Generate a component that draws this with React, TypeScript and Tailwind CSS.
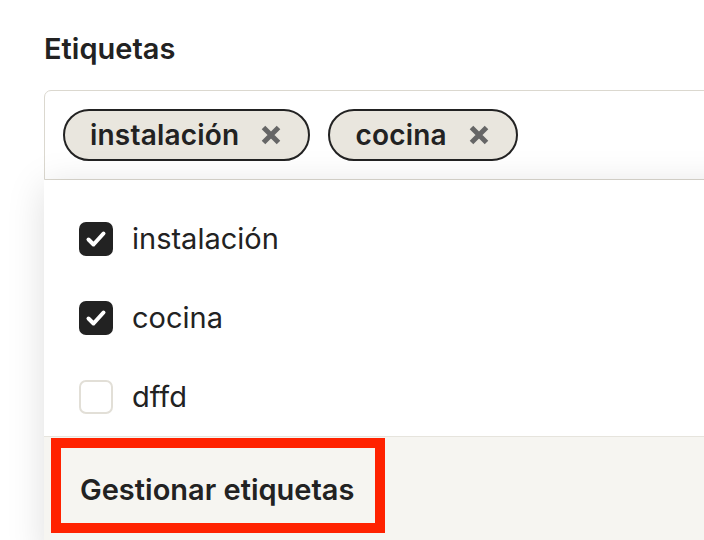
import React from 'react';

type Tag = { label: string; checked: boolean };

const tags: Tag[] = [
  { label: 'instalación', checked: true },
  { label: 'cocina', checked: true },
  { label: 'dffd', checked: false },
];

const font = { fontFamily: 'Inter, "Noto Sans", sans-serif' };

const XIcon = () => (
  <svg width="20" height="20" viewBox="0 0 20 20" className="shrink-0">
    <path d="M2.5 2.5L17.5 17.5M17.5 2.5L2.5 17.5" stroke="#666" strokeWidth="5" />
  </svg>
);

const Chip = ({ label }: { label: string }) => (
  <span className="flex h-[52px] items-center gap-[22px] rounded-full border-2 border-[#222] bg-[#e9e6de] pl-[25px] pr-[27px] text-[28px] font-semibold tracking-[0.2px] text-[#222]">
    {label}
    <XIcon />
  </span>
);

const Checkbox = ({ checked }: { checked: boolean }) =>
  checked ? (
    <span className="flex size-[34px] shrink-0 items-center justify-center rounded-[7px] bg-[#222]">
      <svg width="24" height="24" viewBox="0 0 24 24">
        <path d="M4.5 12.5L9.5 17.5L19.5 6.5" fill="none" stroke="#fff" strokeWidth="4" strokeLinecap="round" strokeLinejoin="round" />
      </svg>
    </span>
  ) : (
    <span className="size-[34px] shrink-0 rounded-[7px] border-2 border-[#e2dfd7] bg-white" />
  );

export default function App() {
  return (
    <div className="h-[540px] w-[704px] overflow-hidden bg-white text-[#222]" style={font}>
      <div className="w-[760px] pl-[44px] pt-[32px]">
        <div className="text-[29px] font-semibold leading-[34px]">Etiquetas</div>
        <div className="mt-[24px] flex h-[90px] items-center gap-[18px] rounded-t-[7px] border border-[#dbd8cf] px-[18px]">
          {tags
            .filter((t) => t.checked)
            .map((t) => (
              <Chip key={t.label} label={t.label} />
            ))}
        </div>
        <div className="relative bg-white shadow-[0_6px_36px_rgba(0,0,0,0.13)]">
          <div className="pt-[19px]">
            {tags.map((t) => (
              <div key={t.label} className="flex h-[79px] items-center gap-[19px] pl-[35px] text-[29px]">
                <Checkbox checked={t.checked} />
                <span>{t.label}</span>
              </div>
            ))}
          </div>
          <div className="h-[120px] border-t border-[#e6e4dd] bg-[#f6f5f1] pl-[7px]">
            <button className="mt-px flex h-[95px] w-[334px] items-center border-[10px] border-[#ff2200] pl-[19px] pt-[8px] text-[29px] font-semibold text-[#222]">
              Gestionar etiquetas
            </button>
          </div>
        </div>
      </div>
    </div>
  );
}
